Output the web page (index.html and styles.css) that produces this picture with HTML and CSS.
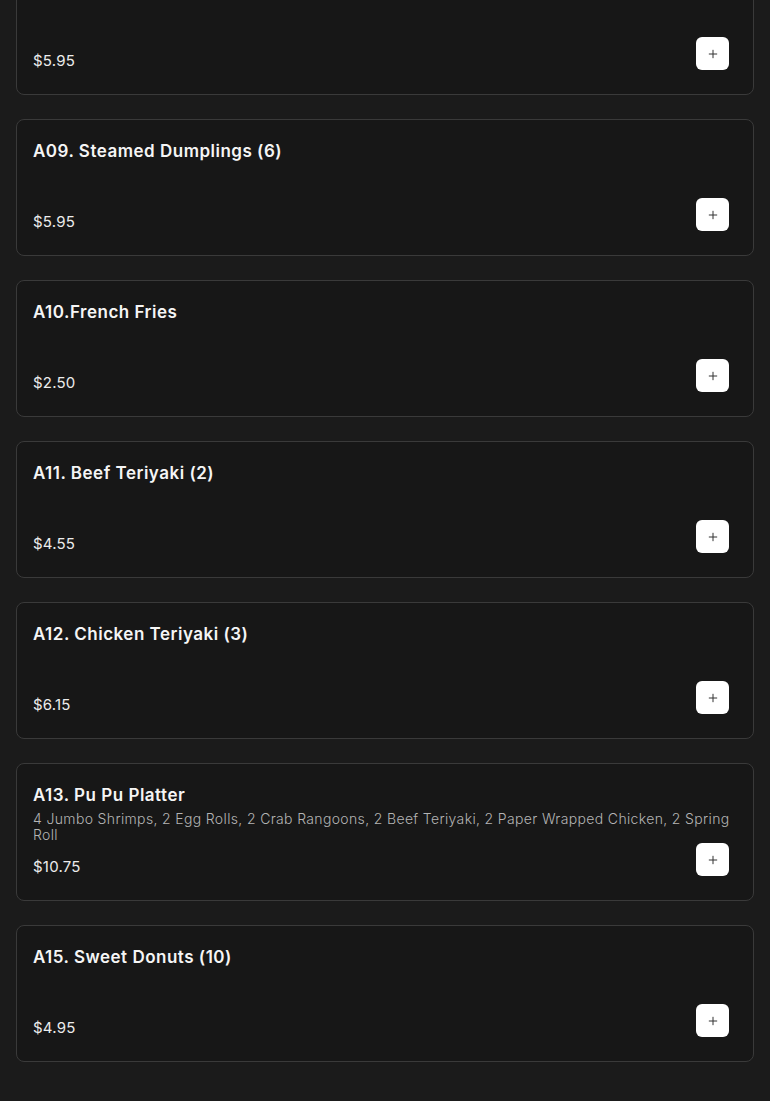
FILE: index.html
```html
<!DOCTYPE html>
<html lang="en">
<head>
    <meta charset="UTF-8">
    <meta name="viewport" content="width=device-width, initial-scale=1.0">
    <title>Menu - Appetizers</title>
    <link rel="stylesheet" href="styles.css">
</head>
<body>

<div class="menu-list">
    <div class="menu-item">
        <h3 class="item-name">A08. Fried Dumplings (6)</h3>
        <p class="item-desc"></p>
        <div class="item-footer">
            <span class="item-price">$5.95</span>
            <button class="add-btn" aria-label="Add">
                <svg viewBox="0 0 12 12" width="12" height="12"><path d="M6 1v10M1 6h10"/></svg>
            </button>
        </div>
    </div>

    <div class="menu-item">
        <h3 class="item-name">A09. Steamed Dumplings (6)</h3>
        <p class="item-desc"></p>
        <div class="item-footer">
            <span class="item-price">$5.95</span>
            <button class="add-btn" aria-label="Add">
                <svg viewBox="0 0 12 12" width="12" height="12"><path d="M6 1v10M1 6h10"/></svg>
            </button>
        </div>
    </div>

    <div class="menu-item">
        <h3 class="item-name">A10.French Fries</h3>
        <p class="item-desc"></p>
        <div class="item-footer">
            <span class="item-price">$2.50</span>
            <button class="add-btn" aria-label="Add">
                <svg viewBox="0 0 12 12" width="12" height="12"><path d="M6 1v10M1 6h10"/></svg>
            </button>
        </div>
    </div>

    <div class="menu-item">
        <h3 class="item-name">A11. Beef Teriyaki (2)</h3>
        <p class="item-desc"></p>
        <div class="item-footer">
            <span class="item-price">$4.55</span>
            <button class="add-btn" aria-label="Add">
                <svg viewBox="0 0 12 12" width="12" height="12"><path d="M6 1v10M1 6h10"/></svg>
            </button>
        </div>
    </div>

    <div class="menu-item">
        <h3 class="item-name">A12. Chicken Teriyaki (3)</h3>
        <p class="item-desc"></p>
        <div class="item-footer">
            <span class="item-price">$6.15</span>
            <button class="add-btn" aria-label="Add">
                <svg viewBox="0 0 12 12" width="12" height="12"><path d="M6 1v10M1 6h10"/></svg>
            </button>
        </div>
    </div>

    <div class="menu-item">
        <h3 class="item-name">A13. Pu Pu Platter</h3>
        <p class="item-desc">4 Jumbo Shrimps, 2 Egg Rolls, 2 Crab Rangoons, 2 Beef Teriyaki, 2 Paper Wrapped Chicken, 2 Spring Roll</p>
        <div class="item-footer">
            <span class="item-price">$10.75</span>
            <button class="add-btn" aria-label="Add">
                <svg viewBox="0 0 12 12" width="12" height="12"><path d="M6 1v10M1 6h10"/></svg>
            </button>
        </div>
    </div>

    <div class="menu-item">
        <h3 class="item-name">A15. Sweet Donuts (10)</h3>
        <p class="item-desc"></p>
        <div class="item-footer">
            <span class="item-price">$4.95</span>
            <button class="add-btn" aria-label="Add">
                <svg viewBox="0 0 12 12" width="12" height="12"><path d="M6 1v10M1 6h10"/></svg>
            </button>
        </div>
    </div>
</div>

</body>
</html>
```

FILE: styles.css
```css
body {
    font-family: 'Inter', 'Open Sans', sans-serif;
    background-color: #1b1b1b;
    color: #f2f2f2;
    margin: 0;
}

/* список прокручен: верхняя карточка видна частично */
.menu-list {
    display: flex;
    flex-direction: column;
    gap: 24px;
    padding: 0 16px 40px;
    margin-top: -42px;
}

.menu-item {
    background-color: #171717;
    border: 1px solid #3a3a3a;
    border-radius: 8px;
    padding: 16px;
}

.item-name {
    margin: 3px 0 0;
    font-size: 17px;
    line-height: 24px;
    font-weight: 600;
    letter-spacing: 0.5px;
    color: #f5f5f5;
}

.item-desc {
    margin: 4px 0 0;
    min-height: 31px;
    font-size: 14px;
    line-height: 16px;
    font-weight: 300;
    letter-spacing: 0.35px;
    color: #b4b4b4;
}

.item-footer {
    display: flex;
    justify-content: space-between;
    align-items: flex-start;
}

.item-price {
    margin-top: 12px;
    font-size: 15px;
    line-height: 24px;
    letter-spacing: 0.2px;
    color: #ececec;
}

.add-btn {
    width: 33px;
    height: 33px;
    margin: 0 8px 8px 0;
    padding: 0;
    display: flex;
    align-items: center;
    justify-content: center;
    background-color: #fff;
    border: none;
    border-radius: 6px;
    cursor: pointer;
}

.add-btn svg {
    width: 10px;
    height: 10px;
    stroke: #333;
    stroke-width: 1.2;
    fill: none;
}
```
